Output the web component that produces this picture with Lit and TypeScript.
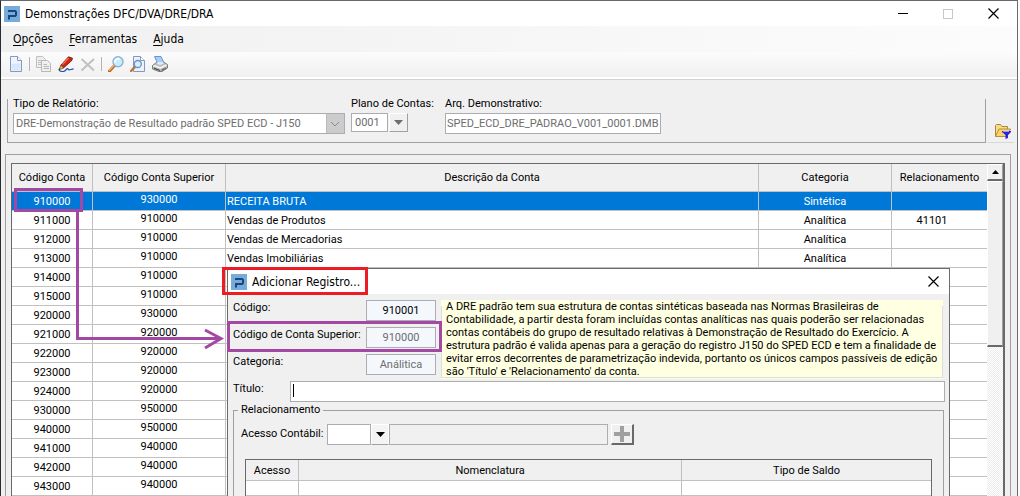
import { LitElement, html, css, svg } from 'lit';
import { customElement } from 'lit/decorators.js';
import { classMap } from 'lit/directives/class-map.js';

const shared = css`
  * { box-sizing: border-box; }
  button, input, select {
    font: inherit;
    color: inherit;
    margin: 0;
    padding: 0;
    border: 0;
    border-radius: 0;
    background: none;
    outline: none;
    opacity: 1;
  }
  svg { display: block; }
`;

const logo = html`<svg width="16" height="16" viewBox="0 0 16 16" aria-hidden="true">
  <rect width="16" height="16" fill="#77abd9"/>
  <path d="M4 4H11.500L13 5.500V9.500L11.500 11H6V13.500H4V9H11V6H4Z" fill="#17477d"/>
</svg>`;

const cross = html`<svg width="11" height="11" viewBox="0 0 11 11" aria-hidden="true">
  <path d="M.5 .5L10.5 10.5M10.5 .5L.5 10.5" stroke="#000" stroke-width="1.2" fill="none"/>
</svg>`;

const down = html`<svg width="9" height="5" viewBox="0 0 9 5" aria-hidden="true">
  <path d="M0 0H9L4.5 5Z" fill="currentColor"/>
</svg>`;

const magnifier = svg`
  <path d="M1.5 15L6.5 9.5" stroke="#b4652b" stroke-width="3" stroke-linecap="round"/>
  <path d="M1.5 14.2L6 9.3" stroke="#f6b45c" stroke-width="1.3" stroke-linecap="round"/>
  <circle cx="10" cy="5.8" r="5" fill="#c9ecfb" stroke="#8cb0d8" stroke-width="1.4"/>
  <path d="M7 6.5A3.3 3.3 0 0 1 11.5 3" stroke="#fff" stroke-width="1.8" fill="none"/>`;

const tools: Record<string, unknown> = {
  Novo: svg`<path d="M2.5 .5H9.5L13.5 4.5V15.5H2.5Z" fill="#eff5fe" stroke="#8398c2"/>
    <path d="M3.5 8V14.5H12.5V7Z" fill="#dbe7f9"/>
    <path d="M9.5 .5V4.5H13.5" fill="#fff" stroke="#8398c2"/>`,
  Copiar: svg`<path d="M.5 .5H6.5L9.5 3.5V11.5H.5Z" fill="#eee" stroke="#c0c0c0"/>
    <path d="M2 4.5H7M2 6.5H7M2 8.5H7" stroke="#c0c0c0"/>
    <path d="M5.5 4.5H11.5L14.5 7.5V15.5H5.5Z" fill="#f0f0f0" stroke="#b8b8b8"/>
    <path d="M7.5 8.5H11M7.5 10.5H13M7.5 12.5H13" stroke="#b8b8b8"/>`,
  Alterar: svg`<path d="M10.5 .8L14.5 2.2L13.8 4.5L5.5 12L2.8 9.3Z" fill="#d62413" stroke="#5a1410" stroke-width=".8"/>
    <path d="M10.5 2L4.5 8.5" stroke="#f86a50" stroke-width="1.3"/>
    <path d="M3 9.3L5.5 12L.8 13.8Z" fill="#f7c063" stroke="#583414" stroke-width=".7"/>
    <path d="M.3 14L1.8 12.5L2.3 13.3Z" fill="#111"/>
    <path d="M1 14.3C4 16.5 7 15.6 8.2 13.6C9 12.2 10 12.3 10.3 13.5C10.8 14.6 13 13.2 15.6 12.8" fill="none" stroke="#244fae" stroke-width="1.2"/>`,
  Excluir: svg`<path d="M1.5 3L14 14.5M14 3L1.5 14.5" stroke="#c0c0c0" stroke-width="2" fill="none"/>`,
  Pesquisar: magnifier,
  Visualizar: svg`<path d="M3.5 .5H10.5L14.5 4.5V15.5H3.5Z" fill="#eaf2fe" stroke="#8398c2"/>
    <path d="M10.5 .5V4.5H14.5" fill="#fff" stroke="#8398c2"/>
    <path d="M1 15L5 10.8" stroke="#c17433" stroke-width="2.4" stroke-linecap="round"/>
    <circle cx="7.8" cy="8" r="3.5" fill="#d3f0fb" stroke="#6f90c4" stroke-width="1.3"/>`,
  Imprimir: svg`<path d="M2.5 .5H9L12 7H5.5Z" fill="#a8cdf6" stroke="#6d93cf"/>
    <path d="M.5 9.500L4.500 6.500H12L15.500 8.500V12L10 15.500H7L.5 13Z" fill="#bdbdbd" stroke="#7b7b7b"/>
    <path d="M4.500 7.500L5.500 6H11L12 7.500L8 9Z" fill="#d8eaff"/>
    <path d="M1.500 9.500L8.500 12L14.500 9" stroke="#f7f7f7" stroke-width="1.4"/>
    <path d="M2 11.500L8 14V15L2 12.800Z" fill="#444"/>
    <path d="M9.500 13.500L14 11.300V12.600L9.500 15Z" fill="#666"/>`,
};

const icon = (shape: unknown) =>
  html`<svg width="16" height="16" viewBox="0 0 16 16" fill="none" aria-hidden="true">${shape}</svg>`;

type Account = [code: string, parent: string, name?: string, kind?: string, relation?: string];

const accounts: Account[] = [
  ['910000', '930000', 'RECEITA BRUTA', 'Sintética'],
  ['911000', '910000', 'Vendas de Produtos', 'Analítica', '41101'],
  ['912000', '910000', 'Vendas de Mercadorias', 'Analítica'],
  ['913000', '910000', 'Vendas Imobiliárias', 'Analítica'],
  ['914000', '910000'],
  ['915000', '910000'],
  ['920000', '930000'],
  ['921000', '920000'],
  ['922000', '920000'],
  ['923000', '920000'],
  ['924000', '920000'],
  ['930000', '950000'],
  ['940000', '950000'],
  ['941000', '940000'],
  ['942000', '940000'],
  ['943000', '940000'],
];

@customElement('accounts-grid')
export class AccountsGrid extends LitElement {
  static styles = [shared, css`
    :host {
      display: flex;
      border: 1px solid #696969;
      border-right-width: 2px;
      border-bottom: 0;
      background: #fff;
    }
    table { flex: 1; min-width: 0; table-layout: fixed; border-collapse: separate; border-spacing: 0; align-self: flex-start; }
    th, td {
      padding: 0 1px;
      font-weight: normal;
      text-align: center;
      border-right: 1px solid #c0c0c0;
      border-bottom: 1px solid #c0c0c0;
      overflow: hidden;
      white-space: nowrap;
      line-height: 18px;
    }
    th { height: 28px; background: #f0f0f0; }
    td { height: 19px; padding-top: 2px; line-height: 16px; vertical-align: top; }
    th:last-child, td:last-child { border-right: 0; }
    .code { width: 81px; }
    .parent, .kind { width: 133px; }
    .relation { width: 95px; }
    td.parent { padding-top: 0; }
    td.name { text-align: left; }
    td.relation { padding-right: 16px; }
    .selected td { background: #0078d7; color: #fff; }
    .scroll {
      flex: none;
      width: 16px;
      display: flex;
      flex-direction: column;
      background: repeating-conic-gradient(#fff 0 25%, #ececec 0 50%) 0 0 / 2px 2px;
    }
    .up, .thumb {
      background: #f0f0f0;
      border: 1px solid #fff;
      border-right-color: #a0a0a0;
      border-bottom: 2px solid #696969;
    }
    .up { height: 17px; display: grid; place-items: center; }
    .thumb { height: 166px; }
  `];

  render() {
    return html`
      <table>
        <thead>
          <tr>
            <th class="code">Código Conta</th>
            <th class="parent">Código Conta Superior</th>
            <th>Descrição da Conta</th>
            <th class="kind">Categoria</th>
            <th class="relation">Relacionamento</th>
          </tr>
        </thead>
        <tbody>
          ${accounts.map(([code, parent, name, kind, relation], i) => html`
            <tr class=${classMap({ selected: i === 0 })}>
              <td>${code}</td>
              <td class="parent">${parent}</td>
              <td class="name">${name}</td>
              <td>${kind}</td>
              <td class="relation">${relation}</td>
            </tr>`)}
        </tbody>
      </table>
      <div class="scroll">
        <button class="up" aria-label="Rolar para cima">
          <svg width="7" height="4" viewBox="0 0 7 4"><path d="M0 4L3.5 0L7 4Z"/></svg>
        </button>
        <div class="thumb"></div>
      </div>`;
  }
}

@customElement('record-dialog')
export class RecordDialog extends LitElement {
  static styles = [shared, css`
    :host {
      display: flex;
      flex-direction: column;
      background: #f0f0f0;
      border: 1px solid #6b6b6b;
      border-bottom: 0;
    }
    header {
      flex: none;
      display: flex;
      align-items: center;
      gap: 5px;
      height: 25px;
      padding: 0 10px 0 3px;
      background: #fff;
      font: 12px "DejaVu Sans Condensed", "Open Sans", sans-serif;
    }
    header span { flex: 1; }
    .top { display: flex; gap: 5px; padding: 6px 5px 0; }
    .fields { flex: none; width: 203px; display: grid; gap: 6px; align-content: start; }
    .row { display: flex; justify-content: space-between; }
    label { line-height: 15px; }
    .row input {
      width: 70px;
      height: 21px;
      text-align: center;
      background: #f4f8fd;
      border: 1px solid #abadb3;
    }
    input:disabled { color: #6d6d6d; }
    .hint {
      flex: 1;
      height: 79px;
      margin-right: 1px;
      padding: 0 5px;
      background: #ffffe1;
      line-height: 13px;
      white-space: nowrap;
      background-image: linear-gradient(#dcdcdc, #dcdcdc), linear-gradient(#dcdcdc, #dcdcdc), linear-gradient(#dcdcdc, #dcdcdc);
      background-repeat: no-repeat;
      background-size: 1px 72px, 1px 72px, 100% 1px;
      background-position: 0 6px, 100% 6px, 0 77px;
    }
    .hint p { margin: 0; }
    .title { display: flex; padding: 2px 4px 0 5px; }
    .title label { width: 57px; }
    .title input {
      flex: 1;
      height: 21px;
      padding: 0 2px;
      border: 1px solid #abadb3;
      background: linear-gradient(#000, #000) 2px 2px / 1px 13px no-repeat #fff;
      caret-color: transparent;
    }
    fieldset {
      flex: 1;
      min-width: 0;
      margin: 1px 5px 0;
      padding: 0 11px;
      border: 1px solid #a0a0a0;
      border-bottom: 0;
    }
    legend { padding: 0 3px; margin-left: -7px; line-height: 14px; }
    .lookup { display: flex; align-items: flex-start; padding-top: 7px; }
    .lookup label { width: 86px; margin-left: -4px; padding-top: 2px; }
    .lookup input { height: 21px; border: 1px solid #abadb3; }
    .key { width: 44px; background: #fff; }
    .drop { width: 18px; height: 21px; display: grid; place-items: center; border: 1px solid #fff; border-bottom-color: #a0a0a0; background: #f4f4f4; }
    .found { width: 219px; background: #f0f0f0; }
    .add { width: 23px; height: 21px; margin-left: 3px; display: grid; place-items: center; border: 1px solid #fff; border-right: 2px solid #696969; border-bottom: 2px solid #696969; }
    table { width: 100%; margin-top: 14px; table-layout: fixed; border-collapse: separate; border-spacing: 0; border: 1px solid #696969; border-bottom: 0; background: #fff; }
    th, td { padding: 0; font-weight: normal; border-right: 1px solid #c0c0c0; border-bottom: 1px solid #c0c0c0; }
    th { height: 21px; background: #f0f0f0; }
    td { height: 15px; }
    th:last-child, td:last-child { border-right: 0; }
    .access { width: 53px; }
    .balance { width: 249px; }
  `];

  render() {
    return html`
      <header>${logo}<span>Adicionar Registro...</span><button aria-label="Fechar">${cross}</button></header>
      <div class="top">
        <div class="fields">
          <div class="row"><label for="code">Código:</label><input id="code" readonly value="910001"></div>
          <div class="row"><label for="parent">Código de Conta Superior:</label><input id="parent" disabled value="910000"></div>
          <div class="row"><label for="kind">Categoria:</label><input id="kind" disabled value="Análitica"></div>
        </div>
        <div class="hint">
          <p>A DRE padrão tem sua estrutura de contas sintéticas baseada nas Normas Brasileiras de</p>
          <p>Contabilidade, a partir desta foram incluídas contas analíticas nas quais poderão ser relacionadas</p>
          <p>contas contábeis do grupo de resultado relativas à Demonstração de Resultado do Exercício. A</p>
          <p>estrutura padrão é valida apenas para a geração do registro J150 do SPED ECD e tem a finalidade de</p>
          <p>evitar erros decorrentes de parametrização indevida, portanto os únicos campos passíveis de edição</p>
          <p>são 'Título' e 'Relacionamento' da conta.</p>
        </div>
      </div>
      <div class="title"><label for="title">Título:</label><input id="title"></div>
      <fieldset>
        <legend>Relacionamento</legend>
        <div class="lookup">
          <label for="key">Acesso Contábil:</label>
          <input id="key" class="key">
          <button class="drop" aria-label="Abrir lista">${down}</button>
          <input class="found" aria-label="Conta encontrada" disabled>
          <button class="add" aria-label="Adicionar">
            <svg width="16" height="16" viewBox="0 0 16 16"><path d="M6 0H10V6H16V10H10V16H6V10H0V6H6Z" fill="#a0a0a0"/></svg>
          </button>
        </div>
        <table>
          <thead><tr><th class="access">Acesso</th><th>Nomenclatura</th><th class="balance">Tipo de Saldo</th></tr></thead>
          <tbody><tr><td></td><td></td><td></td></tr></tbody>
        </table>
      </fieldset>`;
  }
}

@customElement('app-root')
export class AppRoot extends LitElement {
  static styles = [shared, css`
    :host {
      display: block;
      height: 100vh;
      padding-right: 2px;
      box-sizing: border-box;
      overflow: hidden;
      position: relative;
      background: #fff;
      color: #000;
      font: 11px Roboto, "Liberation Sans", sans-serif;
    }
    .window {
      height: 100%;
      display: flex;
      flex-direction: column;
      overflow: hidden;
      background: #f0f0f0;
      border: 1px solid #696969;
      border-left-color: #2b2b33;
      border-bottom: 0;
    }
    .titlebar, .menu, .toolbar { flex: none; display: flex; align-items: center; }
    .titlebar, .menu { font: 12px "DejaVu Sans Condensed", "Open Sans", sans-serif; }
    .titlebar { height: 25px; gap: 5px; padding: 0 18px 0 3px; background: #fff; }
    .caption { flex: 1; }
    .controls { display: flex; gap: 35px; }
    .menu { height: 26px; gap: 16px; padding: 0 12px; background: linear-gradient(90deg, #f0f0f0, #fcfcfc); }
    .menu u { text-underline-offset: 2px; }
    .toolbar {
      height: 28px;
      padding: 0 4px 4px;
      background: linear-gradient(#fcfcfc, #f0f0f0 25px, #fff 25px, #fff 27px, #d2d2d2 27px);
    }
    .toolbar button { padding: 0 3px; }
    .sep { width: 1px; height: 14px; margin: 0 3px 0 2px; background: #b5b5b5; }
    .filters { flex: none; display: flex; padding: 19px 3px 0 6px; height: 63px; }
    .group { flex: 1; display: flex; padding-left: 5px; border: 1px solid #a0a0a0; border-top: 0; }
    .field label { display: block; height: 14px; line-height: 10px; }
    .type { width: 332px; margin-right: 6px; }
    .combo, .file input, .plan input { border: 1px solid #abadb3; background: #fff; color: #6d6d6d; }
    .combo { position: relative; height: 21px; }
    .combo select { width: 100%; height: 19px; padding: 0 2px; appearance: none; }
    .combo svg { position: absolute; right: 0; top: 0; pointer-events: none; }
    .plan { width: 94px; }
    .plan div { display: flex; gap: 1px; }
    .plan input { width: 37px; height: 19px; padding: 0 3px; }
    .drop { width: 19px; height: 19px; display: grid; place-items: center; border: 1px solid #fff; border-right-color: #a0a0a0; border-bottom-color: #a0a0a0; color: #6d6d6d; }
    .file input { width: 216px; height: 21px; padding: 0 1px; }
    .filter { width: 27px; display: grid; place-items: end end; padding: 0 3px 3px 0; margin-left: 1px; border-bottom: 1px solid #d8d8d8; }
    .sheet {
      flex: 1;
      min-height: 0;
      display: flex;
      margin: 11px 6px 0 4px;
      padding: 8px 5px 0;
      border: 1px solid #a0a0a0;
      border-bottom: 0;
    }
    accounts-grid { flex: 1; min-width: 0; }
    record-dialog { position: absolute; left: 227px; right: 70px; top: 268px; bottom: 0; }
    .marks { position: absolute; left: 0; top: 0; pointer-events: none; }
  `];

  private tool(name: string) {
    return html`<button aria-label=${name}>${icon(tools[name])}</button>`;
  }

  render() {
    return html`
      <div class="window">
        <div class="titlebar">
          ${logo}<span class="caption">Demonstrações DFC/DVA/DRE/DRA</span>
          <div class="controls">
            <button aria-label="Minimizar"><svg width="10" height="11" viewBox="0 0 10 11"><path d="M0 5.5H10" stroke="#000"/></svg></button>
            <button aria-label="Maximizar" disabled><svg width="10" height="10" viewBox="0 0 10 10"><rect x=".5" y=".5" width="9" height="9" fill="none" stroke="#c8c8c8"/></svg></button>
            <button aria-label="Fechar">${cross}</button>
          </div>
        </div>
        <nav class="menu">
          <button><u>O</u>pções</button><button><u>F</u>erramentas</button><button><u>A</u>juda</button>
        </nav>
        <div class="toolbar">
          ${this.tool('Novo')}<span class="sep"></span>
          ${this.tool('Copiar')}${this.tool('Alterar')}${this.tool('Excluir')}<span class="sep"></span>
          ${this.tool('Pesquisar')}${this.tool('Visualizar')}${this.tool('Imprimir')}
        </div>
        <div class="filters">
          <div class="group">
            <div class="field type">
              <label for="type">Tipo de Relatório:</label>
              <div class="combo">
                <select id="type" disabled><option>DRE-Demonstração de Resultado padrão SPED ECD - J150</option></select>
                <svg width="18" height="19" viewBox="0 0 18 19"><rect width="18" height="19" fill="#ccc"/><path d="M.5 0V19" stroke="#bbb"/><path d="M5 8L9 12L13 8" fill="none" stroke="#8a8a8a"/></svg>
              </div>
            </div>
            <div class="field plan">
              <label for="plan">Plano de Contas:</label>
              <div><input id="plan" disabled value="0001"><button class="drop" aria-label="Abrir lista">${down}</button></div>
            </div>
            <div class="field file">
              <label for="file">Arq. Demonstrativo:</label>
              <input id="file" disabled value="SPED_ECD_DRE_PADRAO_V001_0001.DMB">
            </div>
          </div>
          <button class="filter" aria-label="Filtrar">
            ${icon(svg`<path d="M.5 13.5V2.5L1.5 1.5H5.5L7 3.5H12.5V6" fill="#f8dc83" stroke="#a6893f"/>
              <path d="M.5 13.5L4 6H15.5L12 13.5Z" fill="#fbd36b" stroke="#b8903a"/>
              <path d="M7 8H16V9L13 12V15L10.5 16V12L7 9Z" fill="#2424e8"/><path d="M8 8.5H14" stroke="#8c9cff"/>`)}
          </button>
        </div>
        <div class="sheet"><accounts-grid></accounts-grid></div>
      </div>
      <record-dialog></record-dialog>
      <svg class="marks" width="450" height="360" viewBox="0 0 450 360" fill="none" stroke-width="3" aria-hidden="true">
        <g stroke="#a349a4">
          <rect x="15.5" y="189.5" width="66" height="21"/>
          <path d="M77.5 212V338.5H220"/>
          <path d="M205 330L221 338.5L205 348"/>
          <rect x="228.5" y="322.5" width="212" height="28"/>
        </g>
        <rect x="223.5" y="268.5" width="143" height="25" stroke="#ed1c24"/>
      </svg>`;
  }
}
